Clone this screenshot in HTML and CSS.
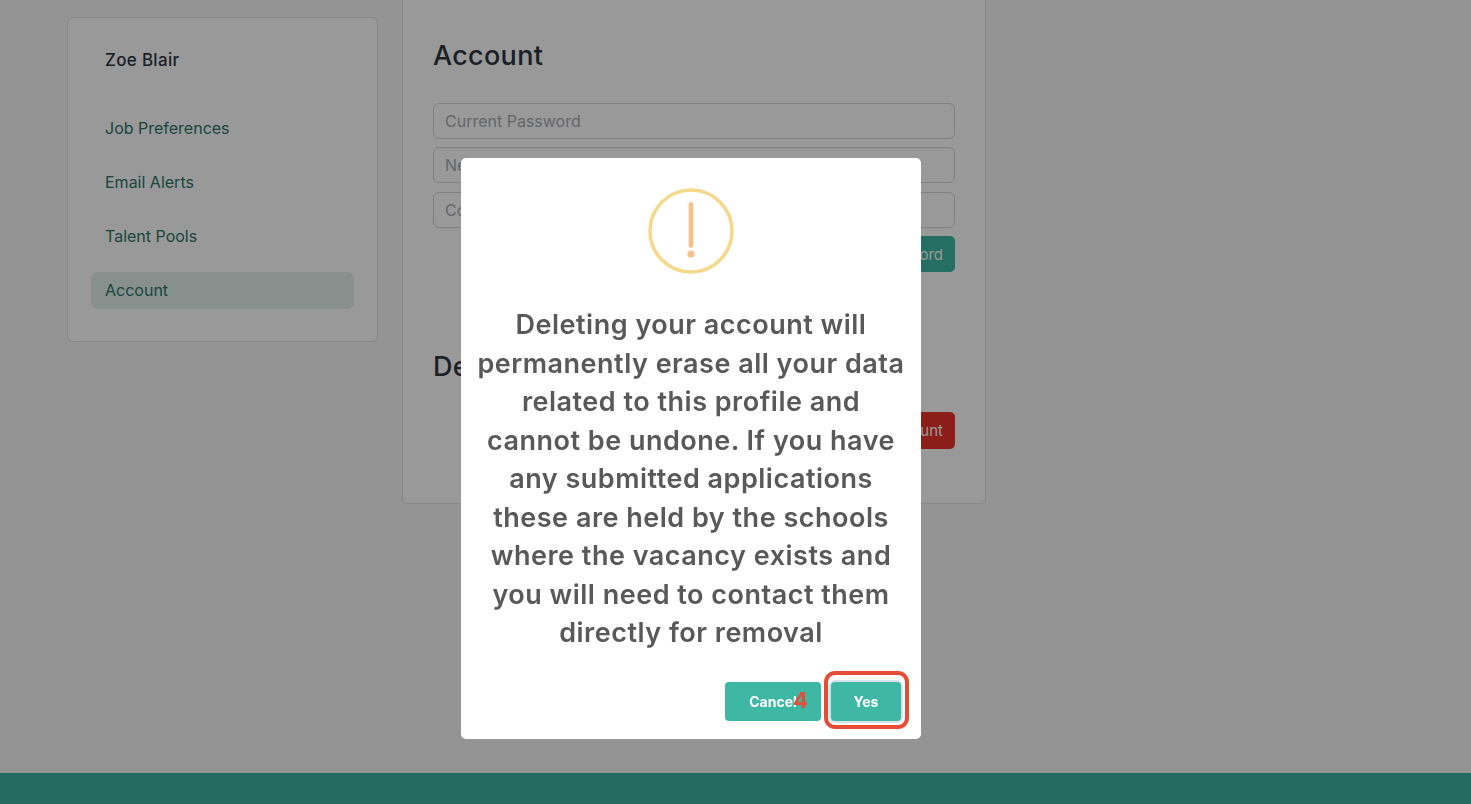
FILE: index.html
```html
<!DOCTYPE html>
<html lang="en">

<head>
    <meta charset="UTF-8">
    <meta name="viewport" content="width=device-width, initial-scale=1.0">
    <title>Account</title>
    <link rel="stylesheet" href="styles.css">
</head>

<body>
    <div class="page">
        <div class="container">
            <div class="sidebar">
                <h3 class="name">Zoe Blair</h3>
                <ul class="side-menu">
                    <li><a href="#">Job Preferences</a></li>
                    <li><a href="#">Email Alerts</a></li>
                    <li><a href="#">Talent Pools</a></li>
                    <li><a href="#" class="active">Account</a></li>
                </ul>
            </div>
            <div class="content">
                <h2 class="title">Account</h2>
                <form class="pass-form">
                    <input type="password" placeholder="Current Password">
                    <input type="password" placeholder="New Password">
                    <input type="password" placeholder="Confirm Password">
                    <div class="form-btn">
                        <button type="button" class="btn btn-green">Change Password</button>
                    </div>
                </form>
                <h2 class="title title-delete">Delete Account</h2>
                <div class="form-btn">
                    <button type="button" class="btn btn-red">Delete Account</button>
                </div>
            </div>
        </div>
        <div class="footer"></div>
    </div>

    <div class="overlay">
        <div class="modal">
            <svg class="warn-icon" width="86" height="86" viewBox="0 0 86 86" aria-hidden="true">
                <circle cx="43" cy="43" r="41" fill="none" stroke="#f5d88a" stroke-width="3.5"></circle>
                <rect x="40.6" y="14" width="4.8" height="46" rx="2.4" fill="#f5c08c"></rect>
                <circle cx="43" cy="66" r="3.6" fill="#f5c08c"></circle>
            </svg>
            <p class="modal-text">Deleting your account will permanently erase all your data related to this profile and cannot be undone. If you have any submitted applications these are held by the schools where the vacancy exists and you will need to contact them directly for removal</p>
            <div class="modal-btns">
                <button type="button" class="modal-btn modal-btn-cancel">Cancel</button>
                <button type="button" class="modal-btn modal-btn-yes">Yes</button>
            </div>
            <span class="step-ring"></span>
            <span class="step-num">4</span>
        </div>
    </div>
</body>

</html>
```
FILE: styles.css
```css
* {
    box-sizing: border-box;
}

body {
    margin: 0;
    height: 804px;
    overflow: hidden;
    background-color: #f7f7f9;
    font-family: "Inter", "Liberation Sans", sans-serif;
}

.page {
    display: flex;
    flex-direction: column;
    height: 804px;
}

.container {
    display: flex;
    align-items: flex-start;
    gap: 24px;
    height: 773px;
    padding-left: 67px;
}

.sidebar {
    width: 311px;
    height: 325px;
    margin-top: 17px;
    padding: 31px 23px;
    background-color: #fff;
    border: 1px solid #dfe1e6;
    border-radius: 6px;
}

.name {
    margin: 0 0 0 14px;
    font-size: 17px;
    line-height: 22px;
    font-weight: 500;
    letter-spacing: 0.3px;
    color: #2e3440;
}

.side-menu {
    list-style: none;
    margin: 39px 0 0;
    padding: 0;
    display: flex;
    flex-direction: column;
    gap: 17px;
}

.side-menu a {
    display: block;
    height: 37px;
    padding-left: 14px;
    line-height: 37px;
    font-size: 16px;
    color: #2a7568;
    text-decoration: none;
    border-radius: 7px;
}

.side-menu a.active {
    background-color: #e3f1ed;
}

.content {
    width: 584px;
    height: 525px;
    margin-top: -21px;
    padding: 58px 30px 0;
    background-color: #fff;
    border: 1px solid #dfe1e6;
    border-radius: 6px;
}

.title {
    margin: 0;
    font-size: 27px;
    line-height: 36px;
    font-weight: 500;
    letter-spacing: 0.3px;
    color: #2e3440;
}

.title-delete {
    margin-top: 76.5px;
}

.pass-form {
    display: flex;
    flex-direction: column;
    gap: 8.5px;
    margin-top: 28.6px;
}

.pass-form input {
    height: 36px;
    padding: 0 11px;
    font-family: inherit;
    font-size: 16px;
    background-color: #fff;
    border: 1px solid #d3d5da;
    border-radius: 6px;
}

.pass-form input::placeholder {
    color: #a8aab0;
}

.form-btn {
    display: flex;
    justify-content: flex-end;
}

.title-delete + .form-btn {
    margin-top: 27px;
}

.btn {
    height: 36px;
    padding: 0 12px;
    font-family: inherit;
    font-size: 15px;
    color: #fff;
    border: none;
    border-radius: 5px;
}

.btn-green {
    background-color: #3eb8a4;
}

.btn-red {
    height: 37px;
    background-color: #e8332a;
}

.footer {
    flex: 1;
    background-color: #3eb29f;
}

.overlay {
    position: fixed;
    inset: 0;
    background-color: rgba(0, 0, 0, 0.4);
}

.modal {
    position: absolute;
    left: 461px;
    top: 158px;
    width: 460px;
    height: 581px;
    padding-top: 30px;
    background-color: #fff;
    border-radius: 5px;
    display: flex;
    flex-direction: column;
    align-items: center;
}

.modal-text {
    margin: 32px 0 0;
    padding: 0 16px;
    text-align: center;
    font-size: 27px;
    line-height: 38.5px;
    font-weight: 600;
    letter-spacing: 0.5px;
    color: #595959;
}

.modal-btns {
    display: flex;
    justify-content: flex-end;
    gap: 10px;
    width: 100%;
    margin-top: auto;
    padding: 0 20px 18px 0;
}

.modal-btn {
    height: 39px;
    font-family: inherit;
    font-size: 14px;
    font-weight: 700;
    color: #fff;
    background-color: #3eb8a4;
    border: none;
    border-radius: 4px;
}

.modal-btn-cancel {
    width: 96px;
}

.modal-btn-yes {
    width: 70px;
    box-shadow: 0 0 0 2px #d5e2ea;
}

.step-ring {
    position: absolute;
    left: 363px;
    top: 513px;
    width: 85px;
    height: 58px;
    border: 4px solid #e64c36;
    border-radius: 11px;
}

.step-num {
    position: absolute;
    left: 332px;
    top: 528px;
    font-size: 22px;
    line-height: 28px;
    font-weight: 700;
    color: #e64c36;
}
```
